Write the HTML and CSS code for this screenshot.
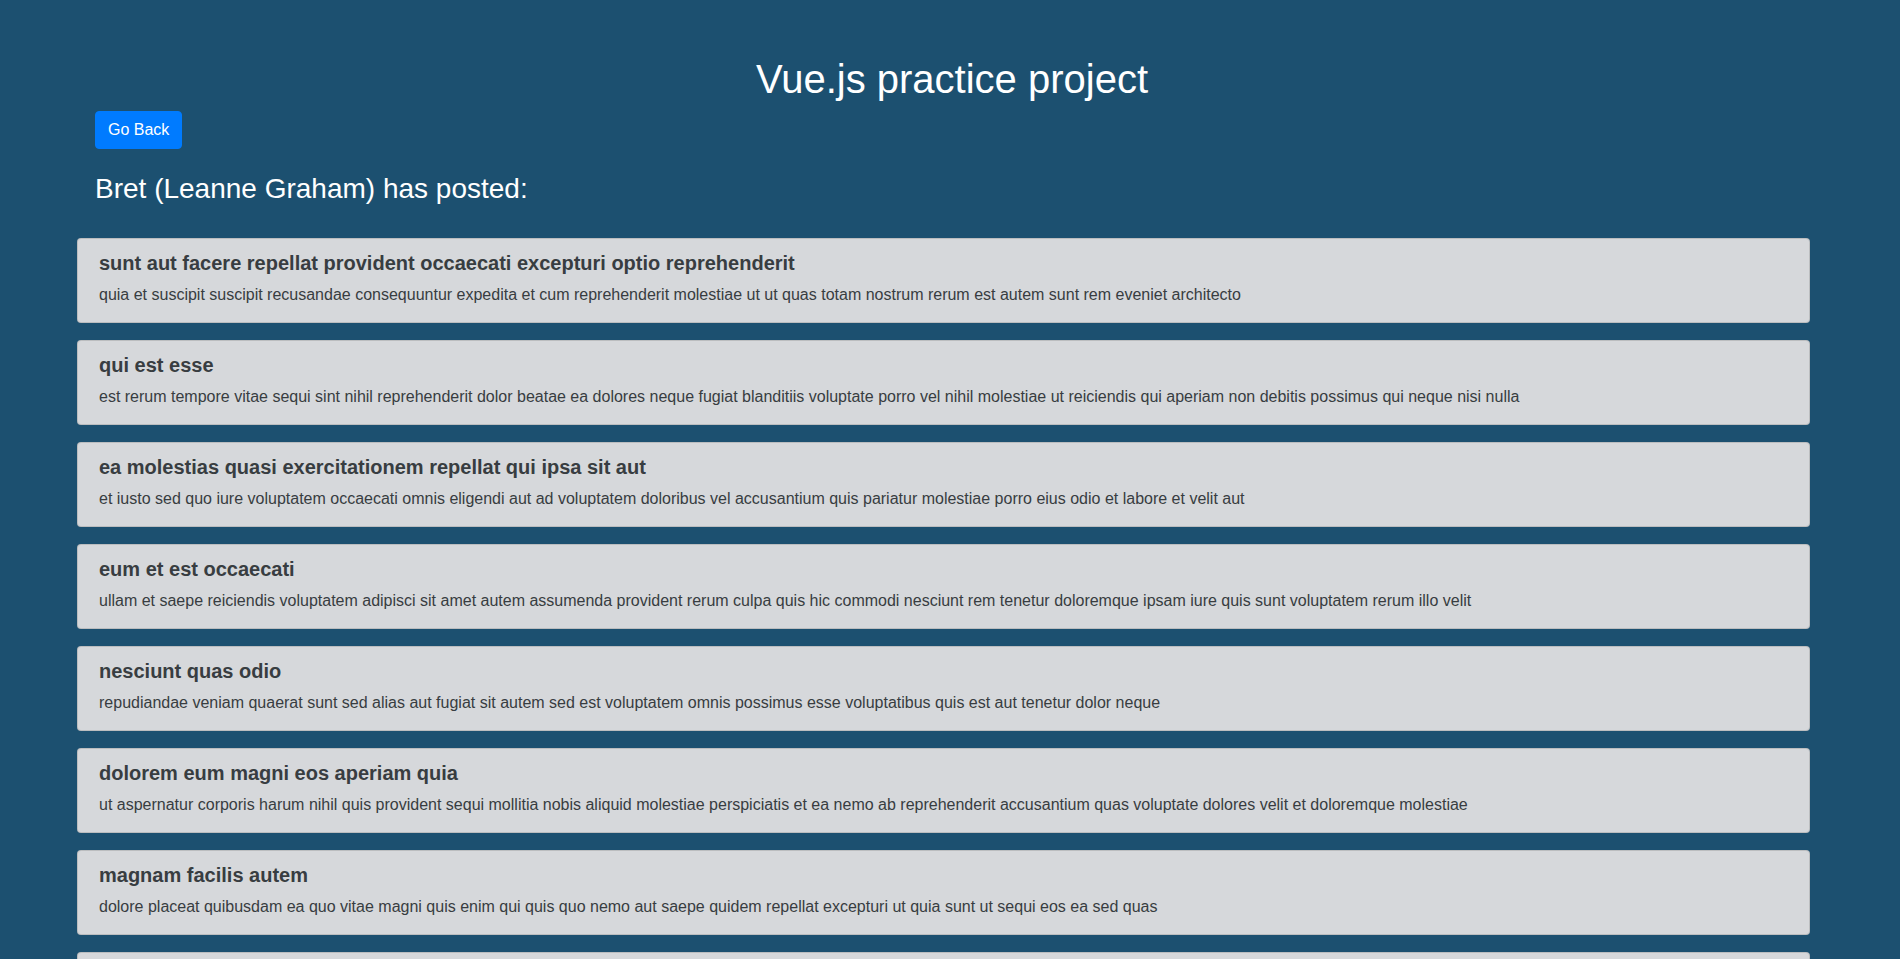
FILE: index.html
```html
<!DOCTYPE html>
<html lang="en">
<head>
<meta charset="utf-8">
<title>Vue.js practice project</title>
<link rel="stylesheet" href="styles.css">
</head>
<body>
<div class="page">
  <h1 class="title">Vue.js practice project</h1>
  <div class="intro">
    <button class="btn-back" type="button">Go Back</button>
    <h3 class="author">Bret (Leanne Graham) has posted:</h3>
  </div>
  <ul class="posts">
    <li class="post">
      <h5 class="post-title">sunt aut facere repellat provident occaecati excepturi optio reprehenderit</h5>
      <p class="post-body">quia et suscipit suscipit recusandae consequuntur expedita et cum reprehenderit molestiae ut ut quas totam nostrum rerum est autem sunt rem eveniet architecto</p>
    </li>
    <li class="post">
      <h5 class="post-title">qui est esse</h5>
      <p class="post-body">est rerum tempore vitae sequi sint nihil reprehenderit dolor beatae ea dolores neque fugiat blanditiis voluptate porro vel nihil molestiae ut reiciendis qui aperiam non debitis possimus qui neque nisi nulla</p>
    </li>
    <li class="post">
      <h5 class="post-title">ea molestias quasi exercitationem repellat qui ipsa sit aut</h5>
      <p class="post-body">et iusto sed quo iure voluptatem occaecati omnis eligendi aut ad voluptatem doloribus vel accusantium quis pariatur molestiae porro eius odio et labore et velit aut</p>
    </li>
    <li class="post">
      <h5 class="post-title">eum et est occaecati</h5>
      <p class="post-body">ullam et saepe reiciendis voluptatem adipisci sit amet autem assumenda provident rerum culpa quis hic commodi nesciunt rem tenetur doloremque ipsam iure quis sunt voluptatem rerum illo velit</p>
    </li>
    <li class="post">
      <h5 class="post-title">nesciunt quas odio</h5>
      <p class="post-body">repudiandae veniam quaerat sunt sed alias aut fugiat sit autem sed est voluptatem omnis possimus esse voluptatibus quis est aut tenetur dolor neque</p>
    </li>
    <li class="post">
      <h5 class="post-title">dolorem eum magni eos aperiam quia</h5>
      <p class="post-body">ut aspernatur corporis harum nihil quis provident sequi mollitia nobis aliquid molestiae perspiciatis et ea nemo ab reprehenderit accusantium quas voluptate dolores velit et doloremque molestiae</p>
    </li>
    <li class="post">
      <h5 class="post-title">magnam facilis autem</h5>
      <p class="post-body">dolore placeat quibusdam ea quo vitae magni quis enim qui quis quo nemo aut saepe quidem repellat excepturi ut quia sunt ut sequi eos ea sed quas</p>
    </li>
    <li class="post">
      <h5 class="post-title">dolorem dolore est ipsam</h5>
      <p class="post-body">dignissimos aperiam dolorem qui eum facilis quibusdam animi sint suscipit qui sint possimus cum quaerat magni maiores excepturi ipsam ut commodi dolor voluptatum modi aut vitae</p>
    </li>
    <li class="post">
      <h5 class="post-title">nesciunt iure omnis dolorem tempora et accusantium</h5>
      <p class="post-body">consectetur animi nesciunt iure dolore enim quia ad veniam autem ut quam aut nobis et est aut quod aut provident voluptas autem voluptas</p>
    </li>
    <li class="post">
      <h5 class="post-title">optio molestias id quia eum</h5>
      <p class="post-body">quo et expedita modi cum officia vel magni doloribus qui repudiandae vero nisi sit quos veniam quod sed accusamus veritatis error</p>
    </li>
  </ul>
</div>
</body>
</html>
```

FILE: styles.css
```css
html, body {
  margin: 0;
  padding: 0;
}

body {
  background: #1c5070;
  font-family: "Liberation Sans", Arial, sans-serif;
  color: #ffffff;
}

.page {
  padding: 55px 0 40px 77px;
  width: 1733px;
}

.title {
  margin: 0 0 8px 0;
  width: 1750px;
  text-align: center;
  font-size: 40px;
  line-height: 48px;
  font-weight: normal;
}

.intro {
  padding-left: 18px;
  display: flex;
  flex-direction: column;
  align-items: flex-start;
}

.btn-back {
  font-family: inherit;
  font-size: 16px;
  line-height: 24px;
  padding: 6px 12px;
  color: #ffffff;
  background: #007bff;
  border: 1px solid #007bff;
  border-radius: 4px;
  cursor: pointer;
}

.author {
  margin: 23px 0 0 0;
  font-size: 28px;
  line-height: 34px;
  font-weight: normal;
}

.posts {
  list-style: none;
  margin: 32px 0 0 0;
  padding: 0;
  display: flex;
  flex-direction: column;
  gap: 17px;
}

.post {
  box-sizing: border-box;
  height: 85px;
  padding: 12px 21px;
  background: #d6d8db;
  color: #383d41;
  border: 1px solid rgba(0, 0, 0, 0.125);
  border-radius: 4px;
}

.post-title {
  margin: 0 0 8px 0;
  font-size: 20px;
  line-height: 24px;
  font-weight: bold;
}

.post-body {
  margin: 0;
  font-size: 16px;
  line-height: 24px;
}
```
